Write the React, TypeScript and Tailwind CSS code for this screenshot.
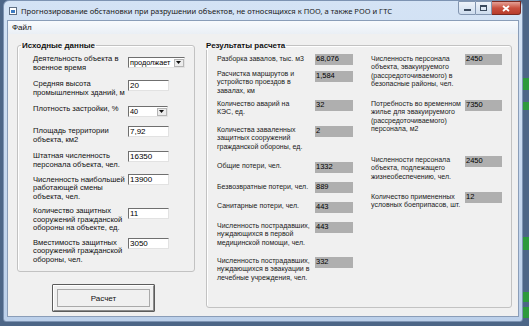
import type { ReactNode } from 'react';

const font = 'font-["Liberation_Sans",Arial,sans-serif]';

function Lines({ lines }: { lines: string[] }) {
  return (
    <>
      {lines.map((l, i) => (
        <div key={i}>{l}</div>
      ))}
    </>
  );
}

function TextBox({ value, className }: { value: string; className: string }) {
  return (
    <div
      className={`h-[11px] bg-white border border-t-[#6f6f6f] border-l-[#6f6f6f] border-r-[#e2e2e2] border-b-[#e2e2e2] pl-[1px] text-[8px] leading-[9px] ${className}`}
    >
      {value}
    </div>
  );
}

function Combo({ value, className }: { value: string; className: string }) {
  return (
    <div
      className={`h-[11px] bg-white border border-t-[#6f6f6f] border-l-[#6f6f6f] border-r-[#e2e2e2] border-b-[#e2e2e2] flex items-stretch ${className}`}
    >
      <div className="flex-1 pl-[1px] text-[7.3px] leading-[9px] overflow-hidden whitespace-nowrap">{value}</div>
      <div className="w-[10px] my-[0.5px] mr-[0.5px] bg-[#ececec] border border-[#b5b5b5] flex items-center justify-center">
        <svg width="5" height="3" viewBox="0 0 5 3">
          <path d="M0 0h5L2.5 3z" fill="#111" />
        </svg>
      </div>
    </div>
  );
}

function Out({ value, className }: { value: string; className: string }) {
  return (
    <div className={`h-[11px] bg-[#afafaf] pl-[1px] text-[7.5px] leading-[10px] ${className}`}>{value}</div>
  );
}

function Row({ className, children }: { className: string; children: ReactNode }) {
  return <div className={`flex items-start ${className}`}>{children}</div>;
}

const lbl = 'text-[7.6px] leading-[8.5px] whitespace-nowrap text-[#111]';
const rlbl = 'text-[7px] leading-[8.4px] whitespace-nowrap text-[#1a1a1a]';

export default function App() {
  return (
    <div className={`relative w-[529px] h-[326px] overflow-hidden bg-[#4d6687] ${font}`}>
      {/* desktop bits behind the window */}
      <div className="absolute right-0 top-[78px] w-[6px] h-[12px] bg-[#2d9a3c]" />
      <div className="absolute right-0 top-[102px] w-[6px] h-[8px] bg-[#2d9a3c]" />
      <div className="absolute right-0 top-[237px] w-[6px] h-[13px] bg-[#2d9a3c]" />
      <div className="absolute right-0 top-[292px] w-[6px] h-[10px] bg-[#2d9a3c]" />
      <div className="absolute right-0 top-[307px] w-[6px] h-[11px] bg-[#2d9a3c]" />

      {/* window */}
      <div className="ml-[3px] w-[520px] h-[322px] rounded-t-[6px] rounded-b-[3px] bg-gradient-to-b from-[#d4e3f5] to-[#bcd0ea] border border-[#7d93b2] flex flex-col">
        {/* title bar */}
        <div className="h-[19px] flex items-start shrink-0">
          <div className="mt-[6px] ml-[5px] w-[8px] h-[8px] border border-[#5f6f84] bg-white relative">
            <div className="absolute left-[1px] top-[2px] w-[4px] h-[3px] bg-[#3d7bc2]" />
          </div>
          <div className="ml-[4px] mt-[5px] text-[7.6px] leading-[10px] text-[#1a1a1a] whitespace-nowrap font-['Noto_Sans',sans-serif]">
            Прогнозирование обстановки при разрушении объектов, не относящихся к ПОО, а также РОО и ГТС
          </div>
          <div className="ml-auto mr-[1px] flex h-[14px]">
            <div className="w-[18px] h-[14px] rounded-bl-[3px] border border-[#8295b0] bg-gradient-to-b from-[#eef3fa] to-[#cddcee] flex items-end justify-center pb-[3px]">
              <div className="w-[7px] h-[2px] bg-[#3b4a5e]" />
            </div>
            <div className="w-[16px] h-[14px] border-y border-r border-[#8295b0] bg-gradient-to-b from-[#eef3fa] to-[#cddcee] flex items-center justify-center">
              <div className="w-[7px] h-[6px] border border-[#3b4a5e] border-t-2" />
            </div>
            <div className="w-[29px] h-[14px] rounded-br-[3px] border-y border-r border-[#7a2a22] bg-gradient-to-b from-[#e4a097] via-[#c9503f] to-[#b83c2c] flex items-center justify-center">
              <svg width="8" height="7" viewBox="0 0 8 7">
                <path d="M1 1l6 5M7 1L1 6" stroke="#fff" strokeWidth="1.8" />
              </svg>
            </div>
          </div>
        </div>

        {/* client area */}
        <div className="mx-[3px] mb-[4px] flex-1 border border-[#8a9db8] bg-[#f0f0f0] flex flex-col">
          {/* menu */}
          <div className="h-[13px] shrink-0 bg-gradient-to-b from-[#f8fafd] to-[#eaeff5] flex items-center pl-[4px]">
            <span className="text-[8px] leading-[9px] text-[#111]">Файл</span>
          </div>

          <div className="flex items-start pt-[7px] pl-[9px]">
            {/* left column */}
            <div className="flex flex-col w-[178px]">
              <fieldset className="w-[178px] h-[231px] border border-[#c2c2c2] rounded-[3px] shadow-[inset_1px_1px_0_#fff]">
                <legend className="ml-[3px] px-[1px] font-bold text-[8px] leading-[9px] text-[#111]">
                  Исходные данные
                </legend>
                <div className="pl-[15px] pt-[5px] flex flex-col">
                  <Row className="h-[25px]">
                    <div className={`w-[95px] ${lbl}`}>
                      <Lines lines={['Деятельность объекта в', 'военное время']} />
                    </div>
                    <Combo value="продолжает" className="w-[57px] mt-[2px]" />
                  </Row>
                  <Row className="h-[25px]">
                    <div className={`w-[95px] ${lbl}`}>
                      <Lines lines={['Средняя высота', 'промышленных зданий, м']} />
                    </div>
                    <TextBox value="20" className="w-[41px]" />
                  </Row>
                  <Row className="h-[21px]">
                    <div className={`w-[95px] ${lbl}`}>
                      <Lines lines={['Плотность застройки, %']} />
                    </div>
                    <Combo value="40" className="w-[40px] mt-[1px]" />
                  </Row>
                  <Row className="h-[25px]">
                    <div className={`w-[95px] mt-[1px] ${lbl}`}>
                      <Lines lines={['Площадь территории', 'объекта, км2']} />
                    </div>
                    <TextBox value="7,92" className="w-[41px]" />
                  </Row>
                  <Row className="h-[23px]">
                    <div className={`w-[95px] mt-[1px] ${lbl}`}>
                      <Lines lines={['Штатная численность', 'персонала объекта, чел.']} />
                    </div>
                    <TextBox value="16350" className="w-[41px]" />
                  </Row>
                  <Row className="h-[33px]">
                    <div className={`w-[95px] mt-[1.5px] ${lbl}`}>
                      <Lines lines={['Численность наибольшей', 'работающей смены', 'объекта, чел.']} />
                    </div>
                    <TextBox value="13900" className="w-[41px]" />
                  </Row>
                  <Row className="h-[31px]">
                    <div className={`w-[95px] ${lbl}`}>
                      <Lines lines={['Количество защитных', 'сооружений гражданской', 'обороны на объекте, ед.']} />
                    </div>
                    <TextBox value="11" className="w-[41px] mt-[1px]" />
                  </Row>
                  <Row className="h-[28px]">
                    <div className={`w-[95px] mt-[0.5px] ${lbl}`}>
                      <Lines lines={['Вместимость защитных', 'сооружений гражданской', 'обороны, чел.']} />
                    </div>
                    <TextBox value="3050" className="w-[41px]" />
                  </Row>
                </div>
              </fieldset>

              <button
                type="button"
                className="mt-[12px] ml-[35px] w-[103px] h-[28px] border border-[#5c5c5c] rounded-[1px] bg-[#f0f0f0] p-0"
              >
                <div className="w-full h-full border border-t-white border-l-white border-r-[#8c8c8c] border-b-[#8c8c8c] flex items-center justify-center">
                  <div className="w-[93px] h-[18px] border border-[#a9a9a9] flex items-center justify-center text-[8px] leading-[9px] text-[#111]">
                    Расчет
                  </div>
                </div>
              </button>
            </div>

            {/* right group */}
            <fieldset className="ml-[11px] w-[306px] h-[267px] border border-[#c2c2c2] rounded-[3px] shadow-[inset_1px_1px_0_#fff]">
              <legend className="ml-[-2px] px-[1px] font-bold text-[8px] leading-[9px] text-[#111]">
                Результаты расчета
              </legend>
              <div className="pl-[10px] pt-[4px] flex">
                <div className="w-[154px] flex flex-col">
                  <Row className="h-[16px]">
                    <div className={`w-[98px] mt-[1px] ${rlbl}`}>
                      <Lines lines={['Разборка завалов, тыс. м3']} />
                    </div>
                    <Out value="68,076" className="w-[38px]" />
                  </Row>
                  <Row className="h-[30px]">
                    <div className={`w-[98px] ${rlbl}`}>
                      <Lines lines={['Расчистка маршрутов и', 'устройство проездов в', 'завалах, км']} />
                    </div>
                    <Out value="1,584" className="w-[38px] mt-[1px]" />
                  </Row>
                  <Row className="h-[26px]">
                    <div className={`w-[98px] ${rlbl}`}>
                      <Lines lines={['Количество аварий на', 'КЭС, ед.']} />
                    </div>
                    <Out value="32" className="w-[38px]" />
                  </Row>
                  <Row className="h-[36px]">
                    <div className={`w-[98px] ${rlbl}`}>
                      <Lines lines={['Количества заваленных', 'защитных сооружений', 'гражданской обороны, ед.']} />
                    </div>
                    <Out value="2" className="w-[38px]" />
                  </Row>
                  <Row className="h-[20px]">
                    <div className={`w-[98px] ${rlbl}`}>
                      <Lines lines={['Общие потери, чел.']} />
                    </div>
                    <Out value="1332" className="w-[38px]" />
                  </Row>
                  <Row className="h-[20px]">
                    <div className={`w-[98px] mt-[0.5px] ${rlbl}`}>
                      <Lines lines={['Безвозвратные потери, чел.']} />
                    </div>
                    <Out value="889" className="w-[38px]" />
                  </Row>
                  <Row className="h-[20px]">
                    <div className={`w-[98px] ${rlbl}`}>
                      <Lines lines={['Санитарные потери, чел.']} />
                    </div>
                    <Out value="443" className="w-[38px]" />
                  </Row>
                  <Row className="h-[35px]">
                    <div className={`w-[98px] ${rlbl}`}>
                      <Lines lines={['Численность пострадавших,', 'нуждающихся в первой', 'медицинской помощи, чел.']} />
                    </div>
                    <Out value="443" className="w-[38px]" />
                  </Row>
                  <Row className="h-[30px]">
                    <div className={`w-[98px] ${rlbl}`}>
                      <Lines lines={['Численность пострадавших,', 'нуждающихся в эвакуации в', 'лечебные учреждения, чел.']} />
                    </div>
                    <Out value="332" className="w-[38px]" />
                  </Row>
                </div>

                <div className="flex flex-col">
                  <Row className="h-[46px]">
                    <div className={`w-[94px] mt-[1px] ${rlbl}`}>
                      <Lines
                        lines={['Численность персонала', 'объекта, эвакуируемого', '(рассредоточиваемого) в', 'безопасные районы, чел.']}
                      />
                    </div>
                    <Out value="2450" className="w-[37px]" />
                  </Row>
                  <Row className="h-[56px]">
                    <div className={`w-[94px] ${rlbl}`}>
                      <Lines
                        lines={['Потребность во временном', 'жилье для эвакуируемого', '(рассредоточиваемого)', 'персонала, м2']}
                      />
                    </div>
                    <Out value="7350" className="w-[37px]" />
                  </Row>
                  <Row className="h-[36px]">
                    <div className={`w-[94px] ${rlbl}`}>
                      <Lines lines={['Численности персонала', 'объекта, подлежащего', 'жизнеобеспечению, чел.']} />
                    </div>
                    <Out value="2450" className="w-[37px]" />
                  </Row>
                  <Row className="h-[20px]">
                    <div className={`w-[94px] mt-[1px] ${rlbl}`}>
                      <Lines lines={['Количество примененных', 'условных боеприпасов, шт.']} />
                    </div>
                    <Out value="12" className="w-[37px]" />
                  </Row>
                </div>
              </div>
            </fieldset>
          </div>
        </div>
      </div>
    </div>
  );
}
